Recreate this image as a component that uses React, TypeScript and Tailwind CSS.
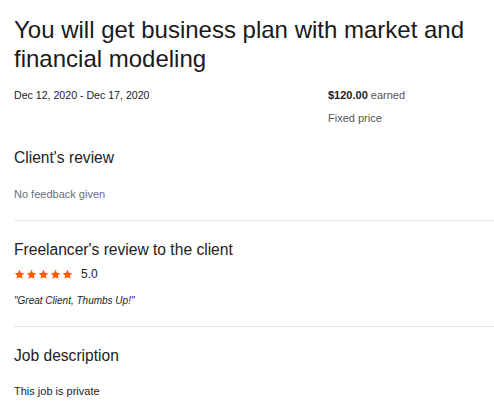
const Star = () => (
  <svg viewBox="0 0 24 24" className="h-[11px] w-[11px]" fill="#ff5a00">
    <path d="M12 1.8l3.1 6.6 7.2.9-5.3 5 1.4 7.1L12 17.9l-6.4 3.5 1.4-7.1-5.3-5 7.2-.9z" />
  </svg>
);

export default function App() {
  return (
    <div className="min-h-screen bg-white px-[14px] pt-[15px] text-[#222] font-['Liberation_Sans',Arial,sans-serif]">
      <h1 className="text-[24px] leading-[29px] font-normal text-[#1a1a1a]">
        You will get business plan with market and financial modeling
      </h1>

      {/* dates & price */}
      <div className="mt-[15px] flex text-[11px] leading-[14px]">
        <div className="w-[314px] text-[10.6px]">Dec 12, 2020 - Dec 17, 2020</div>
        <div className="flex flex-col gap-[9px]">
          <div>
            <span className="font-semibold">$120.00</span>{" "}
            <span className="text-[#555]">earned</span>
          </div>
          <div className="text-[#555]">Fixed price</div>
        </div>
      </div>

      {/* client review */}
      <section className="mt-[23px] border-b border-[#e4e8ee] pb-[19px] -mr-[14px] pr-[14px]">
        <h2 className="text-[15.6px] leading-[20px]">Client's review</h2>
        <p className="mt-[19px] text-[11px] leading-[14px] text-[#66707e]">No feedback given</p>
      </section>

      {/* freelancer review */}
      <section className="pt-[19px] pb-[19px] border-b border-[#e4e8ee] -mr-[14px] pr-[14px]">
        <h2 className="text-[15.6px] leading-[20px]">Freelancer's review to the client</h2>
        <div className="mt-[6px] flex items-center gap-[8px]">
          <div className="flex gap-[1px]">
            <Star />
            <Star />
            <Star />
            <Star />
            <Star />
          </div>
          <span className="text-[12px] leading-[16px]">5.0</span>
        </div>
        <p className="mt-[12px] text-[10px] leading-[13px] italic">"Great Client, Thumbs Up!"</p>
      </section>

      {/* job description */}
      <section className="pt-[19px]">
        <h2 className="text-[15.6px] leading-[20px]">Job description</h2>
        <p className="mt-[18px] text-[11px] leading-[14px]">This job is private</p>
      </section>
    </div>
  );
}
